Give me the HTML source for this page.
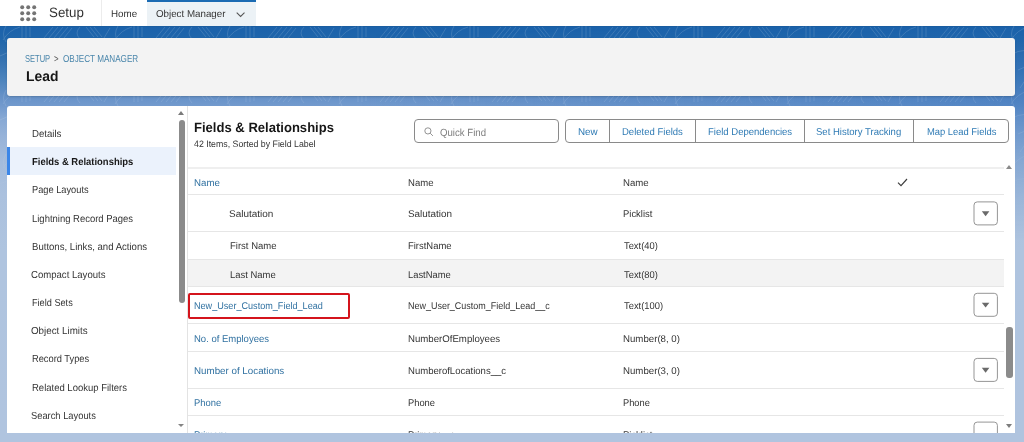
<!DOCTYPE html>
<html lang="en">
<head>
<meta charset="utf-8">
<title>Lead | Fields &amp; Relationships | Salesforce</title>
<style>
*{box-sizing:border-box;margin:0;padding:0}
html,body{width:1024px;height:442px;overflow:hidden}
body{position:relative;font-family:"Liberation Sans",sans-serif;color:#181818;
  background:linear-gradient(180deg,#1a5b9b 26px,#1b62ab 27.5px,#2066ab 40px,#2a6bac 50px,#3a76b4 65px,#4d84bd 80px,#6591c7 95px,#7199cd 105px,#86a8d4 118px,#97b3d9 137px,#a4bcdc 162px,#abc1de 195px,#afc4df 250px,#b0c4df 442px);}
.abs{position:absolute;white-space:nowrap}
.t{position:absolute;white-space:nowrap;line-height:1;transform-origin:0 0;display:block}
#nav{position:absolute;left:0;top:0;width:1024px;height:26px;background:#fff}
#tab{position:absolute;left:147px;top:0;width:109px;height:26px;background:linear-gradient(180deg,#1b6bb3 0,#1b6bb3 1.6px,#ecf2f6 1.6px)}
#sep{position:absolute;left:101px;top:0;width:1px;height:26px;background:#ececec}
#hdr{position:absolute;left:7px;top:37.7px;width:1008.3px;height:58.6px;background:#f3f3f3;border-radius:3px;box-shadow:0 1px 2px rgba(0,0,0,.16)}
#main{position:absolute;left:7px;top:106px;width:1008px;height:326.5px;background:#fff;border-radius:3px 3px 0 0}
#sel{position:absolute;left:7px;top:147px;width:169px;height:28px;background:#ebf2fc;border-left:3px solid #3b86e8}
#vdiv{position:absolute;left:187px;top:106px;width:1px;height:326.5px;background:#e3e3e3}
.hl{position:absolute;left:188px;width:816px;height:1px;background:#e6e6e6}
.dd{position:absolute;left:974px;width:24px;height:24px;border:1px solid #909090;border-radius:4px;background:#fff}
.dd:after{content:"";position:absolute;left:7px;top:10px;border-left:4px solid transparent;border-right:4px solid transparent;border-top:4.5px solid #666}
#search{position:absolute;left:414px;top:119px;width:145px;height:24px;border:1px solid #8a8a8a;border-radius:4px;background:#fff}
#btns{position:absolute;left:564.5px;top:119px;width:444.5px;height:23.5px;border:1px solid #8a8a8a;border-radius:4px;background:#fff}
.bs{position:absolute;top:119px;width:1px;height:23px;background:#8a8a8a}
#ov{position:absolute;left:0;top:26px;width:1024px;height:230px;background:linear-gradient(90deg,rgba(32,100,180,0) 35%,rgba(32,100,180,.38) 100%);-webkit-mask-image:linear-gradient(180deg,transparent 0,#000 45px,#000 80px,transparent 215px);mask-image:linear-gradient(180deg,transparent 0,#000 45px,#000 80px,transparent 215px)}
#page{position:absolute;left:0;top:0;width:1024px;height:442px;will-change:transform}
#clip{position:absolute;left:0;top:0;width:1024px;height:432.5px;overflow:hidden}
</style>
</head>
<body>
<div id="ov"></div>
<svg class="abs" id="pat" style="left:0;top:26px" width="1024" height="190" viewBox="0 0 1024 190">
<defs>
<pattern id="pp" width="112" height="64" patternUnits="userSpaceOnUse">
<g fill="none" stroke="#fff" stroke-width="0.9">
<path d="M3 14 Q9 4 20 1"/><path d="M6 0 Q1 8 6 16"/>
<path d="M22 0 v12 M26 0 v12 M30 1 v10"/>
<path d="M44 12 l9 -11 M49 12 l9 -11 M54 12 l9 -11 M59 12 l9 -11 M64 12 l8 -10"/>
<path d="M80 1 Q74 7 80 13"/><path d="M86 1 l8 10 M90 1 l8 10 M94 1 l8 10"/>
<path d="M104 12 l6 -10"/>
<path d="M0 30 Q20 18 40 30 T80 30 T112 30"/><path d="M10 44 Q30 32 52 46 T112 44"/>
<path d="M60 20 l10 14 M66 20 l10 14 M72 20 l10 14"/><path d="M20 50 l-8 12 M26 50 l-8 12 M32 50 l-8 12"/>
<path d="M92 40 Q84 50 94 62"/>
</g>
</pattern>
<linearGradient id="pf" x1="0" y1="0" x2="0" y2="1"><stop offset="0" stop-color="#fff" stop-opacity=".16"/><stop offset=".5" stop-color="#fff" stop-opacity=".12"/><stop offset="1" stop-color="#fff" stop-opacity="0"/></linearGradient>
<mask id="pm"><rect width="1024" height="190" fill="url(#pf)"/></mask>
</defs>
<rect width="1024" height="190" fill="url(#pp)" mask="url(#pm)"/>
</svg>
<div id="page">
<div id="nav"></div>
<svg class="abs" style="left:20px;top:5px" width="17" height="17" viewBox="0 0 17 17" fill="#747474">
  <circle cx="2.2" cy="2.2" r="2"/><circle cx="8.2" cy="2.2" r="2"/><circle cx="14.2" cy="2.2" r="2"/>
  <circle cx="2.2" cy="8.2" r="2"/><circle cx="8.2" cy="8.2" r="2"/><circle cx="14.2" cy="8.2" r="2"/>
  <circle cx="2.2" cy="14.2" r="2"/><circle cx="8.2" cy="14.2" r="2"/><circle cx="14.2" cy="14.2" r="2"/>
</svg>
<span class="t" id="setup" style="left:48.66px;top:6.44px;font-size:13.6px;color:#333;transform:scaleX(0.9798) rotate(0.03deg)">Setup</span>
<div id="sep"></div>
<span class="t" id="home" style="left:111.25px;top:9.04px;font-size:10px;color:#343434;transform:scaleX(0.9791) rotate(0.03deg)">Home</span>
<div id="tab"></div>
<span class="t" id="om" style="left:155.86px;top:9.04px;font-size:10px;color:#343434;transform:scaleX(0.9764) rotate(0.03deg)">Object Manager</span>
<svg class="abs" style="left:236px;top:11.8px" width="10" height="6" viewBox="0 0 10 6" fill="none" stroke="#555" stroke-width="1.1"><path d="M0.7 0.7 L4.6 4.4 L8.5 0.7"/></svg>

<div id="hdr"></div>
<span class="t" id="bc1" style="left:25.35px;top:53.75px;font-size:10.1px;color:#4a86ab;transform:scaleX(0.7468) rotate(0.03deg)">SETUP</span><span class="t" id="bc2" style="left:54.19px;top:53.75px;font-size:10.1px;color:#555;transform:scaleX(0.7777) rotate(0.03deg)">&gt;</span><span class="t" id="bc3" style="left:62.69px;top:53.75px;font-size:10.1px;color:#4a86ab;transform:scaleX(0.8044) rotate(0.03deg)">OBJECT MANAGER</span>
<span class="t" id="lead" style="left:26.16px;top:69.18px;font-size:14.2px;color:#161616;font-weight:bold;transform:scaleX(0.9788) rotate(0.03deg)">Lead</span>

<div id="main"></div>
<div id="clip">
<div id="sel"></div>
<span class="t" id="s1" style="left:31.58px;top:128.72px;font-size:10.2px;color:#343434;transform:scaleX(0.9442) rotate(0.03deg)">Details</span><span class="t" id="s2" style="left:31.66px;top:157.27px;font-size:10.2px;color:#181818;font-weight:bold;transform:scaleX(0.9273) rotate(0.03deg)">Fields &amp; Relationships</span><span class="t" id="s3" style="left:31.60px;top:185.37px;font-size:10.2px;color:#343434;transform:scaleX(0.9089) rotate(0.03deg)">Page Layouts</span><span class="t" id="s4" style="left:31.58px;top:213.97px;font-size:10.2px;color:#343434;transform:scaleX(0.9298) rotate(0.03deg)">Lightning Record Pages</span><span class="t" id="s5" style="left:31.58px;top:241.87px;font-size:10.2px;color:#343434;transform:scaleX(0.9407) rotate(0.03deg)">Buttons, Links, and Actions</span><span class="t" id="s6" style="left:31.42px;top:269.97px;font-size:10.2px;color:#343434;transform:scaleX(0.9397) rotate(0.03deg)">Compact Layouts</span><span class="t" id="s7" style="left:31.61px;top:298.27px;font-size:10.2px;color:#343434;transform:scaleX(0.8987) rotate(0.03deg)">Field Sets</span><span class="t" id="s8" style="left:31.47px;top:326.37px;font-size:10.2px;color:#343434;transform:scaleX(0.9609) rotate(0.03deg)">Object Limits</span><span class="t" id="s9" style="left:31.58px;top:354.17px;font-size:10.2px;color:#343434;transform:scaleX(0.9119) rotate(0.03deg)">Record Types</span><span class="t" id="s10" style="left:31.58px;top:382.87px;font-size:10.2px;color:#343434;transform:scaleX(0.9318) rotate(0.03deg)">Related Lookup Filters</span><span class="t" id="s11" style="left:31.29px;top:411.07px;font-size:10.2px;color:#343434;transform:scaleX(0.9158) rotate(0.03deg)">Search Layouts</span>
<!-- sidebar scrollbar -->
<div class="abs" style="left:178px;top:111px;border-left:3.5px solid transparent;border-right:3.5px solid transparent;border-bottom:4px solid #7a7a7a"></div>
<div class="abs" style="left:178.5px;top:120px;width:6px;height:183px;border-radius:3px;background:#8b8b8b"></div>
<div class="abs" style="left:178.2px;top:424px;border-left:3.4px solid transparent;border-right:3.4px solid transparent;border-top:3.8px solid #848484"></div>
<div id="vdiv"></div>

<span class="t" id="title" style="left:194.30px;top:121.19px;font-size:13.6px;color:#161616;font-weight:bold;transform:scaleX(0.9601) rotate(0.03deg)">Fields &amp; Relationships</span>
<span class="t" id="sub" style="left:193.82px;top:139.83px;font-size:9.3px;color:#343434;transform:scaleX(0.9441) rotate(0.03deg)">42 Items, Sorted by Field Label</span>

<div id="search"></div>
<svg class="abs" style="left:423.6px;top:127.4px" width="11" height="11" viewBox="0 0 11 11" fill="none" stroke="#939393" stroke-width="1"><circle cx="3.9" cy="3.9" r="3.1"/><path d="M6.2 6.2 L8.9 8.9"/></svg>
<span class="t" id="qf" style="left:439.60px;top:127.60px;font-size:10.4px;color:#7d7d7d;transform:scaleX(0.9262) rotate(0.03deg)">Quick Find</span>
<div id="btns"></div>
<div class="bs" style="left:609px"></div>
<div class="bs" style="left:695px"></div>
<div class="bs" style="left:804px"></div>
<div class="bs" style="left:913px"></div>
<span class="t" id="b1" style="left:577.64px;top:127.23px;font-size:10px;color:#2e7ab4;transform:scaleX(0.9847) rotate(0.03deg)">New</span><span class="t" id="b2" style="left:622.07px;top:127.23px;font-size:10px;color:#2e7ab4;transform:scaleX(0.9519) rotate(0.03deg)">Deleted Fields</span><span class="t" id="b3" style="left:707.58px;top:127.23px;font-size:10px;color:#2e7ab4;transform:scaleX(0.9517) rotate(0.03deg)">Field Dependencies</span><span class="t" id="b4" style="left:816.46px;top:127.23px;font-size:10px;color:#2e7ab4;transform:scaleX(0.9520) rotate(0.03deg)">Set History Tracking</span><span class="t" id="b5" style="left:926.98px;top:127.23px;font-size:10px;color:#2e7ab4;transform:scaleX(0.9391) rotate(0.03deg)">Map Lead Fields</span>

<!-- table -->
<div class="hl" style="top:167px;height:2px;background:#efefef"></div>
<div class="hl" style="top:194px"></div>
<div class="hl" style="top:231px"></div>
<div class="abs" style="left:188px;top:259px;width:816px;height:28px;background:#f3f3f3;border-top:1px solid #e6e6e6;border-bottom:1px solid #e6e6e6"></div>
<div class="hl" style="top:323px"></div>
<div class="hl" style="top:351px"></div>
<div class="hl" style="top:388px"></div>
<div class="hl" style="top:415px"></div>

<span class="t" id="r1a" style="left:193.86px;top:178.10px;font-size:9.8px;color:#3071a1;transform:scaleX(0.9898) rotate(0.03deg)">Name</span><span class="t" id="r1b" style="left:408.08px;top:178.10px;font-size:9.8px;color:#343434;transform:scaleX(0.9737) rotate(0.03deg)">Name</span><span class="t" id="r1c" style="left:623.27px;top:178.10px;font-size:9.8px;color:#343434;transform:scaleX(0.9817) rotate(0.03deg)">Name</span>
<svg class="abs" style="left:897px;top:178px" width="11" height="9" viewBox="0 0 11 9" fill="none" stroke="#3c3c3c" stroke-width="1.15"><path d="M1 4.6 L4 7.6 L10 1"/></svg>
<span class="t" id="r2a" style="left:229.32px;top:209.45px;font-size:9.8px;color:#343434;transform:scaleX(1.0163) rotate(0.03deg)">Salutation</span><span class="t" id="r2b" style="left:407.73px;top:209.45px;font-size:9.8px;color:#343434;transform:scaleX(1.0115) rotate(0.03deg)">Salutation</span><span class="t" id="r2c" style="left:623.26px;top:209.45px;font-size:9.8px;color:#343434;transform:scaleX(0.9647) rotate(0.03deg)">Picklist</span>
<svg class="abs" style="left:972px;top:200px" width="28" height="27" viewBox="0 0 28 27"><rect x="2" y="1.90" width="23.4" height="23" rx="3.2" fill="#fff" stroke="#959595" stroke-width="1"/><path d="M9.8 11.30 h7.6 l-3.8 4.9 z" fill="#6a6a6a"/></svg>
<span class="t" id="r3a" style="left:229.68px;top:241.10px;font-size:9.8px;color:#343434;transform:scaleX(0.9711) rotate(0.03deg)">First Name</span><span class="t" id="r3b" style="left:408.09px;top:241.10px;font-size:9.8px;color:#343434;transform:scaleX(0.9645) rotate(0.03deg)">FirstName</span><span class="t" id="r3c" style="left:623.65px;top:241.10px;font-size:9.8px;color:#343434;transform:scaleX(0.9544) rotate(0.03deg)">Text(40)</span>
<span class="t" id="r4a" style="left:229.69px;top:269.50px;font-size:9.8px;color:#343434;transform:scaleX(0.9635) rotate(0.03deg)">Last Name</span><span class="t" id="r4b" style="left:408.09px;top:269.50px;font-size:9.8px;color:#343434;transform:scaleX(0.9574) rotate(0.03deg)">LastName</span><span class="t" id="r4c" style="left:623.63px;top:269.50px;font-size:9.8px;color:#343434;transform:scaleX(0.9555) rotate(0.03deg)">Text(80)</span>
<div class="abs" id="red" style="left:188px;top:293px;width:161.5px;height:25.5px;border:2px solid #d4141c;border-radius:2px"></div>
<span class="t" id="r5a" style="left:194.00px;top:300.90px;font-size:9.8px;color:#3071a1;transform:scaleX(0.9277) rotate(0.03deg)">New_User_Custom_Field_Lead</span><span class="t" id="r5b" style="left:407.90px;top:300.90px;font-size:9.8px;color:#343434;transform:scaleX(0.9157) rotate(0.03deg)">New_User_Custom_Field_Lead__c</span><span class="t" id="r5c" style="left:623.59px;top:300.90px;font-size:9.8px;color:#343434;transform:scaleX(0.9564) rotate(0.03deg)">Text(100)</span>
<svg class="abs" style="left:972px;top:291px" width="28" height="27" viewBox="0 0 28 27"><rect x="2" y="2.30" width="23.4" height="23" rx="3.2" fill="#fff" stroke="#959595" stroke-width="1"/><path d="M9.8 11.70 h7.6 l-3.8 4.9 z" fill="#6a6a6a"/></svg>
<span class="t" id="r6a" style="left:193.98px;top:333.75px;font-size:9.8px;color:#3071a1;transform:scaleX(0.9693) rotate(0.03deg)">No. of Employees</span><span class="t" id="r6b" style="left:407.86px;top:333.75px;font-size:9.8px;color:#343434;transform:scaleX(0.9835) rotate(0.03deg)">NumberOfEmployees</span><span class="t" id="r6c" style="left:623.27px;top:333.75px;font-size:9.8px;color:#343434;transform:scaleX(0.9868) rotate(0.03deg)">Number(8, 0)</span>
<span class="t" id="r7a" style="left:193.96px;top:365.90px;font-size:9.8px;color:#3071a1;transform:scaleX(0.9983) rotate(0.03deg)">Number of Locations</span><span class="t" id="r7b" style="left:407.88px;top:365.90px;font-size:9.8px;color:#343434;transform:scaleX(0.9732) rotate(0.03deg)">NumberofLocations__c</span><span class="t" id="r7c" style="left:623.27px;top:365.90px;font-size:9.8px;color:#343434;transform:scaleX(0.9868) rotate(0.03deg)">Number(3, 0)</span>
<svg class="abs" style="left:972px;top:356px" width="28" height="27" viewBox="0 0 28 27"><rect x="2" y="2.40" width="23.4" height="23" rx="3.2" fill="#fff" stroke="#959595" stroke-width="1"/><path d="M9.8 11.80 h7.6 l-3.8 4.9 z" fill="#6a6a6a"/></svg>
<span class="t" id="r8a" style="left:194.01px;top:398.20px;font-size:9.8px;color:#3071a1;transform:scaleX(0.9592) rotate(0.03deg)">Phone</span><span class="t" id="r8b" style="left:407.92px;top:398.20px;font-size:9.8px;color:#343434;transform:scaleX(0.9519) rotate(0.03deg)">Phone</span><span class="t" id="r8c" style="left:623.32px;top:398.20px;font-size:9.8px;color:#343434;transform:scaleX(0.9482) rotate(0.03deg)">Phone</span>
<span class="t" id="r9a" style="left:194.01px;top:429.70px;font-size:9.8px;color:#3071a1;transform:scaleX(0.9551) rotate(0.03deg)">Primary</span><span class="t" id="r9b" style="left:407.92px;top:429.70px;font-size:9.8px;color:#343434;transform:scaleX(0.9463) rotate(0.03deg)">Primary__c</span><span class="t" id="r9c" style="left:623.26px;top:429.70px;font-size:9.8px;color:#343434;transform:scaleX(0.9647) rotate(0.03deg)">Picklist</span>
<svg class="abs" style="left:972px;top:420px" width="28" height="27" viewBox="0 0 28 27"><rect x="2" y="2.10" width="23.4" height="23" rx="3.2" fill="#fff" stroke="#959595" stroke-width="1"/></svg>

<!-- right scrollbar -->
<div class="abs" style="left:1005.8px;top:164.5px;border-left:3.3px solid transparent;border-right:3.3px solid transparent;border-bottom:4px solid #8a8a8a"></div>
<div class="abs" style="left:1006px;top:327px;width:6.5px;height:51px;border-radius:3px;background:#8b8b8b"></div>
<div class="abs" style="left:1005.8px;top:424px;border-left:3.3px solid transparent;border-right:3.3px solid transparent;border-top:4px solid #7d7d7d"></div>
</div>
</div>
</body>
</html>
